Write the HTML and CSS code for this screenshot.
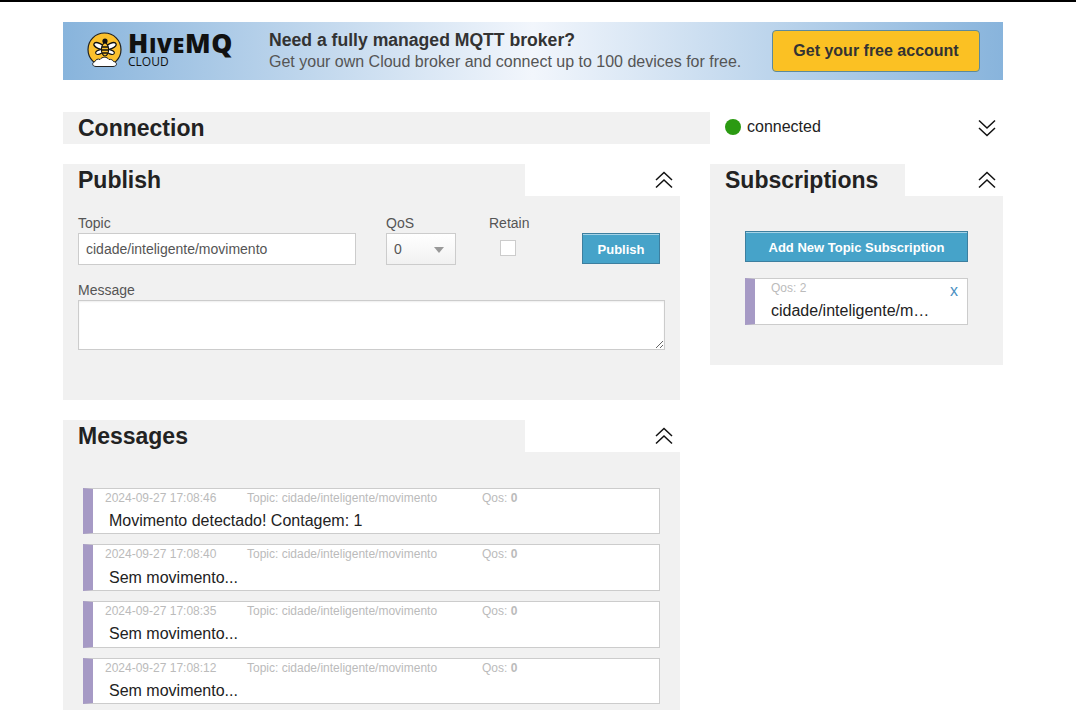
FILE: index.html
```html
<!DOCTYPE html>
<html lang="en">
<head>
<meta charset="UTF-8">
<meta name="viewport" content="width=device-width, initial-scale=1.0">
<title>MQTT Websocket Client</title>
<link rel="stylesheet" href="styles.css">
</head>
<body>

<div class="container">

<div class="banner">
  <div class="logo">
    <svg class="bee" width="36" height="38" viewBox="0 0 36 38">
      <circle cx="17.500" cy="17.500" r="16.500" fill="#fbc02d" stroke="#222" stroke-width="1.200"/>
      <ellipse cx="12" cy="14" rx="5.500" ry="2.600" transform="rotate(25 12 14)" fill="#fff" stroke="#111" stroke-width="1.300"/>
      <ellipse cx="24" cy="14" rx="5.500" ry="2.600" transform="rotate(-25 24 14)" fill="#fff" stroke="#111" stroke-width="1.300"/>
      <ellipse cx="12.500" cy="20" rx="4" ry="2" transform="rotate(-20 12.500 20)" fill="#fff" stroke="#111" stroke-width="1.100"/>
      <ellipse cx="23.500" cy="20" rx="4" ry="2" transform="rotate(20 23.500 20)" fill="#fff" stroke="#111" stroke-width="1.100"/>
      <circle cx="18" cy="9" r="2.600" fill="#111"/>
      <ellipse cx="18" cy="17.500" rx="3.600" ry="6.500" fill="#fbc02d" stroke="#111" stroke-width="1.100"/>
      <path d="M14.800 15h6.400M14.500 18h7M15.200 21h5.600" stroke="#111" stroke-width="1.500"/>
      <path d="M9 34.500c-4 0-4.500-4-1-5 .5-2 3-3 5-2 2-3 7-3 9 0 2-.5 4 .5 4.500 2 4 .5 4 5-.5 5z" fill="#fff" stroke="#222" stroke-width="1"/>
    </svg>
    <div class="wordmark">
      <div class="wordmark-name">H<span class="wordmark-small">IVE</span>MQ</div>
      <div class="wordmark-sub">CLOUD</div>
    </div>
  </div>
  <div class="banner-text">
    <div class="banner-title">Need a fully managed MQTT broker?</div>
    <div class="banner-desc">Get your own Cloud broker and connect up to 100 devices for free.</div>
  </div>
  <a class="banner-button" href="#">Get your free account</a>
</div>

<div class="connection-row">
  <h2 class="connection-title">Connection</h2>
  <div class="status">
    <span class="status-dot"></span>
    <span>connected</span>
    <svg class="chevrons status-chevrons" width="18" height="18" viewBox="0 0 18 18"><path d="M1 1.500l8 7.500 8-7.500M1 9l8 7.500L17 9"/></svg>
  </div>
</div>

<div class="columns">
  <div class="left-column">

    <section>
      <div class="section-head">
        <h2 class="section-tab publish-tab">Publish</h2>
        <svg class="chevrons" width="18" height="18" viewBox="0 0 18 18"><path d="M1 9l8-7.500L17 9M1 16.500L9 9l8 7.500"/></svg>
      </div>
      <div class="panel publish-panel">
        <div class="form-row">
          <div class="field topic-field">
            <label for="topic">Topic</label>
            <input type="text" id="topic" value="cidade/inteligente/movimento">
          </div>
          <div class="field qos-field">
            <label for="qos">QoS</label>
            <div class="select-wrap">
              <select id="qos"><option>0</option><option>1</option><option>2</option></select>
            </div>
          </div>
          <div class="field retain-field">
            <label for="retain">Retain</label>
            <input type="checkbox" id="retain">
          </div>
          <button type="button" class="blue-button publish-button">Publish</button>
        </div>
        <div class="field message-field">
          <label for="message">Message</label>
          <textarea id="message"></textarea>
        </div>
      </div>
    </section>

    <section class="messages-section">
      <div class="section-head">
        <h2 class="section-tab publish-tab">Messages</h2>
        <svg class="chevrons" width="18" height="18" viewBox="0 0 18 18"><path d="M1 9l8-7.500L17 9M1 16.500L9 9l8 7.500"/></svg>
      </div>
      <div class="panel messages-panel">
        <div class="msg">
          <div class="msg-meta"><span class="msg-date">2024-09-27 17:08:46</span><span class="msg-topic">Topic: cidade/inteligente/movimento</span><span>Qos: <b>0</b></span></div>
          <div class="msg-text">Movimento detectado! Contagem: 1</div>
        </div>
        <div class="msg">
          <div class="msg-meta"><span class="msg-date">2024-09-27 17:08:40</span><span class="msg-topic">Topic: cidade/inteligente/movimento</span><span>Qos: <b>0</b></span></div>
          <div class="msg-text">Sem movimento...</div>
        </div>
        <div class="msg">
          <div class="msg-meta"><span class="msg-date">2024-09-27 17:08:35</span><span class="msg-topic">Topic: cidade/inteligente/movimento</span><span>Qos: <b>0</b></span></div>
          <div class="msg-text">Sem movimento...</div>
        </div>
        <div class="msg">
          <div class="msg-meta"><span class="msg-date">2024-09-27 17:08:12</span><span class="msg-topic">Topic: cidade/inteligente/movimento</span><span>Qos: <b>0</b></span></div>
          <div class="msg-text">Sem movimento...</div>
        </div>
      </div>
    </section>

  </div>

  <section class="right-column">
    <div class="section-head">
      <h2 class="section-tab subs-tab">Subscriptions</h2>
      <svg class="chevrons" width="18" height="18" viewBox="0 0 18 18"><path d="M1 9l8-7.500L17 9M1 16.500L9 9l8 7.500"/></svg>
    </div>
    <div class="panel subs-panel">
      <button type="button" class="blue-button add-button">Add New Topic Subscription</button>
      <div class="sub">
        <div class="sub-body">
          <div class="sub-qos">Qos: 2</div>
          <div class="sub-topic">cidade/inteligente/movimento</div>
        </div>
        <a class="sub-close" href="#">x</a>
      </div>
    </div>
  </section>
</div>

</div>

</body>
</html>
```

FILE: styles.css
```css
html, body {
  height: 710px;
  overflow: hidden;
}
body {
  font-family: 'Liberation Sans', Arial, sans-serif;
  margin: 0;
  padding: 0;
  background-color: #fff;
  color: #222;
  border-top: 2px solid #000;
  box-sizing: border-box;
}
.container {
  width: 940px;
  margin-left: 63px;
  padding-top: 20px;
}
h2 {
  margin: 0;
  font-size: 23px;
  line-height: 32px;
  color: #222;
}

/* banner */
.banner {
  display: flex;
  align-items: center;
  height: 58px;
  padding: 0 23px 0 24px;
  background: linear-gradient(to right, #88b4dc, #f2f6fc 50%, #88b4dc);
}
.logo {
  display: flex;
  align-items: flex-start;
  width: 182px;
  height: 38px;
  margin-top: 0;
}
.bee {
  flex: none;
  margin-right: 5px;
}
.wordmark {
  color: #111;
}
.wordmark-name {
  font-family: 'Open Sans', sans-serif;
  font-weight: 800;
  font-size: 26.500px;
  line-height: 22px;
  letter-spacing: 0.600px;
}
.wordmark-small {
  font-size: 21.500px;
}
.wordmark-sub {
  font-family: 'Open Sans', sans-serif;
  font-weight: 400;
  font-size: 12px;
  line-height: 12px;
}
.banner-text {
  flex: 1;
}
.banner-title {
  font-size: 17.600px;
  font-weight: bold;
  line-height: 20px;
  margin-bottom: 2px;
  color: #333;
}
.banner-desc {
  font-size: 16px;
  line-height: 20px;
  color: #555;
}
.banner-button {
  box-sizing: border-box;
  width: 208px;
  height: 42px;
  line-height: 40px;
  text-align: center;
  background-color: #fbc123;
  border: 1px solid #5c8a9c;
  border-radius: 4px;
  color: #333;
  font-size: 16px;
  font-weight: bold;
  text-decoration: none;
}

/* connection row */
.connection-row {
  display: flex;
  margin-top: 32px;
}
.connection-title {
  width: 632px;
  padding-left: 15px;
  background-color: #f1f1f1;
}
.status {
  flex: 1;
  display: flex;
  align-items: center;
  padding: 0 7px 0 15px;
  font-size: 16px;
  height: 30px;
}
.status-dot {
  width: 16px;
  height: 16px;
  margin-right: 6px;
  border-radius: 50%;
  background-color: #2b9a12;
}
.status-chevrons {
  margin-left: auto;
  margin-top: 2px;
}
.chevrons {
  flex: none;
  fill: none;
  stroke: #111;
  stroke-width: 1.500;
}

/* columns */
.columns {
  display: flex;
  margin-top: 20px;
}
.left-column {
  width: 617px;
  margin-right: 30px;
}
.right-column {
  width: 293px;
}
.section-head {
  display: flex;
  align-items: center;
  justify-content: space-between;
  height: 32px;
  padding-right: 7px;
}
.section-tab {
  height: 32px;
  padding-left: 15px;
  background-color: #f1f1f1;
}
.publish-tab {
  width: 447px;
}
.subs-tab {
  width: 180px;
}
.panel {
  background-color: #f1f1f1;
}

/* publish form */
.publish-panel {
  height: 204px;
  box-sizing: border-box;
  padding: 19px 15px 0;
}
.form-row {
  display: flex;
  align-items: flex-start;
}
.field label {
  display: block;
  font-size: 14px;
  line-height: 16px;
  margin-bottom: 2px;
  color: #555;
}
.topic-field {
  width: 278px;
  margin-right: 30px;
}
.topic-field input {
  box-sizing: border-box;
  width: 100%;
  height: 32px;
  padding: 0 7px;
  border: 1px solid #ccc;
  background-color: #fff;
  color: #555;
  font: 14px 'Liberation Sans', Arial, sans-serif;
}
.qos-field {
  width: 70px;
  margin-right: 33px;
}
.select-wrap {
  position: relative;
}
.select-wrap::after {
  content: "";
  position: absolute;
  right: 12px;
  top: 14px;
  border: 5px solid transparent;
  border-top: 6px solid #999;
  border-bottom: 0;
}
.select-wrap select {
  appearance: none;
  box-sizing: border-box;
  width: 100%;
  height: 32px;
  padding: 0 7px;
  border: 1px solid #ccc;
  border-radius: 0;
  background: linear-gradient(to bottom, #fff, #f1f1f1);
  color: #555;
  font: 14px 'Liberation Sans', Arial, sans-serif;
}
.retain-field {
  width: 93px;
}
.retain-field input {
  appearance: none;
  display: block;
  box-sizing: border-box;
  width: 16px;
  height: 16px;
  margin: 9px 0 0 11px;
  border: 1px solid #ccc;
  background-color: #fff;
}
.blue-button {
  box-sizing: border-box;
  height: 31px;
  padding: 2px 0 0;
  border: 1px solid #3d7f9f;
  box-shadow: inset 0 1px 0 #a5d3e6;
  border-radius: 0;
  background-color: #46a3c9;
  color: #fff;
  font: bold 13px 'Liberation Sans', Arial, sans-serif;
}
.publish-button {
  width: 78px;
  margin-top: 18px;
}
.message-field {
  margin-top: 17px;
}
.message-field textarea {
  display: block;
  box-sizing: border-box;
  width: 587px;
  height: 50px;
  border: 1px solid #ccc;
  box-shadow: inset 0 1px 2px #eee;
  background-color: #fff;
}

/* messages */
.messages-section {
  margin-top: 20px;
}
.messages-panel {
  padding: 35.600px 20px 0;
  height: 258px;
  box-sizing: border-box;
}
.msg {
  box-sizing: border-box;
  height: 46.670px;
  margin-bottom: 10px;
  padding-left: 12px;
  border: 1px solid #ccc;
  border-left: 10px solid #a69ac5;
  background-color: #fff;
}
.msg-meta {
  display: flex;
  font-size: 12px;
  line-height: 19px;
  color: #bbb;
}
.msg-date {
  width: 142px;
}
.msg-topic {
  width: 235px;
}
.msg-text {
  margin: 3.400px 0 0 4px;
  font-size: 16px;
  line-height: 20px;
  color: #222;
}

/* subscriptions */
.subs-panel {
  height: 169px;
  box-sizing: border-box;
  padding: 35px 35px 0;
}
.add-button {
  display: block;
  width: 223px;
}
.sub {
  display: flex;
  box-sizing: border-box;
  height: 47px;
  margin-top: 16px;
  border: 1px solid #ccc;
  border-left: 10px solid #a69ac5;
  background-color: #fff;
}
.sub-body {
  width: 160px;
  margin-left: 16px;
}
.sub-qos {
  font-size: 12px;
  line-height: 16px;
  color: #bbb;
  margin-top: 1px;
}
.sub-topic {
  margin-top: 5px;
  font-size: 16px;
  line-height: 20px;
  color: #222;
  white-space: nowrap;
  overflow: hidden;
  text-overflow: ellipsis;
}
.sub-close {
  margin: 3px 0 0 19px;
  font-size: 16px;
  line-height: 18px;
  color: #4a90c2;
  text-decoration: none;
}
```
